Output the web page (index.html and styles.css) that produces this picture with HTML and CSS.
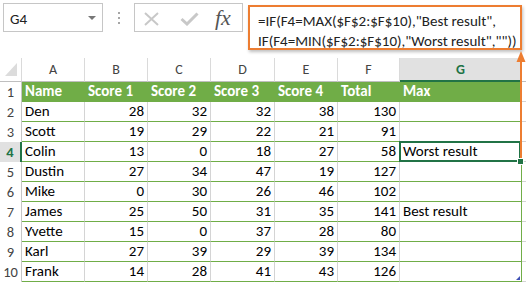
FILE: index.html
```html
<!DOCTYPE html>
<html>
<head>
<meta charset="utf-8">
<link rel="stylesheet" href="styles.css">
</head>
<body>
<div class="toolbar">
  <div class="namebox"><span>G4</span><span class="caret"></span></div>
  <div class="grip"><i></i><i></i><i></i></div>
  <div class="fxbox">
    <svg class="ic-x" width="15" height="14" viewBox="0 0 15 14"><path d="M1 1 L14 13 M14 1 L1 13" stroke="#c8c8c8" stroke-width="2" fill="none"/></svg>
    <svg class="ic-ok" width="19" height="14" viewBox="0 0 19 14"><path d="M1.5 7 L7 12 L17.5 1.5" stroke="#c8c8c8" stroke-width="3" fill="none"/></svg>
    <span class="fx">fx</span>
  </div>
  <div class="formula">=IF(F4=MAX($F$2:$F$10),"Best result",<br>IF(F4=MIN($F$2:$F$10),"Worst result",""))</div>
</div>
<svg class="arrow" width="10" height="110" viewBox="0 0 10 110"><path d="M5 8 L5 110" stroke="#ed7d31" stroke-width="2"/><path d="M5 0 L0.5 11 L9.5 11 Z" fill="#ed7d31"/></svg>
<div class="sheet">
  <div class="ch corner"></div><div class="ch">A</div><div class="ch">B</div><div class="ch">C</div><div class="ch">D</div><div class="ch">E</div><div class="ch">F</div><div class="ch chg">G</div><div class="ch stub"></div>

  <div class="rh">1</div><div class="c hd">Name</div><div class="c hd">Score 1</div><div class="c hd">Score 2</div><div class="c hd">Score 3</div><div class="c hd">Score 4</div><div class="c hd">Total</div><div class="c hd">Max</div><div class="h"></div>

  <div class="rh">2</div><div class="c">Den</div><div class="c n">28</div><div class="c n">32</div><div class="c n">32</div><div class="c n">38</div><div class="c n">130</div><div class="c g"></div><div class="h"></div>

  <div class="rh">3</div><div class="c">Scott</div><div class="c n">19</div><div class="c n">29</div><div class="c n">22</div><div class="c n">21</div><div class="c n">91</div><div class="c g"></div><div class="h"></div>

  <div class="rh rhs">4</div><div class="c">Colin</div><div class="c n">13</div><div class="c n">0</div><div class="c n">18</div><div class="c n">27</div><div class="c n">58</div><div class="c g sel">Worst result</div><div class="h"></div>

  <div class="rh">5</div><div class="c">Dustin</div><div class="c n">27</div><div class="c n">34</div><div class="c n">47</div><div class="c n">19</div><div class="c n">127</div><div class="c g"></div><div class="h"></div>

  <div class="rh">6</div><div class="c">Mike</div><div class="c n">0</div><div class="c n">30</div><div class="c n">26</div><div class="c n">46</div><div class="c n">102</div><div class="c g"></div><div class="h"></div>

  <div class="rh">7</div><div class="c">James</div><div class="c n">25</div><div class="c n">50</div><div class="c n">31</div><div class="c n">35</div><div class="c n">141</div><div class="c g">Best result</div><div class="h"></div>

  <div class="rh">8</div><div class="c">Yvette</div><div class="c n">15</div><div class="c n">0</div><div class="c n">37</div><div class="c n">28</div><div class="c n">80</div><div class="c g"></div><div class="h"></div>

  <div class="rh">9</div><div class="c">Karl</div><div class="c n">27</div><div class="c n">39</div><div class="c n">29</div><div class="c n">39</div><div class="c n">134</div><div class="c g"></div><div class="h"></div>

  <div class="rh">10</div><div class="c">Frank</div><div class="c n">14</div><div class="c n">28</div><div class="c n">41</div><div class="c n">43</div><div class="c n">126</div><div class="c g last"></div><div class="h"></div>
</div>
</body>
</html>
```
FILE: styles.css
```css
* { box-sizing: border-box; margin: 0; padding: 0; }
html, body { width: 526px; height: 283px; overflow: hidden; background: #fff; }
body { font-family: Carlito, "Liberation Sans", Arial, sans-serif; font-size: 15px; color: #000; position: relative; }

.toolbar { height: 58px; display: flex; align-items: flex-start; }
.namebox { margin: 3px 0 0 3px; width: 100px; height: 29px; border: 1px solid #c6c6c6; display: flex; align-items: center; justify-content: space-between; padding: 2px 6px 0 6px; color: #222; font-size: 15px; }
.caret { width: 0; height: 0; border-left: 4px solid transparent; border-right: 4px solid transparent; border-top: 4px solid #777; margin-top: -2px; }
.grip { width: 31px; height: 29px; margin-top: 3px; display: flex; flex-direction: column; align-items: center; justify-content: center; gap: 3px; }
.grip i { display: block; width: 2px; height: 2px; background: #a6a6a6; }
.fxbox { margin-top: 3px; width: 109px; height: 29px; border: 1px solid #c6c6c6; display: flex; align-items: center; padding: 3px 0 0 9px; }
.ic-ok { margin-left: 21px; }
.fx { margin-left: 16px; font-family: "Liberation Serif", "DejaVu Serif", serif; font-style: italic; font-size: 22px; color: #555; line-height: 20px; margin-top: -3px; }
.formula { margin: 5px 0 0 5px; width: 274px; height: 45px; border: 2px solid #ed7d31; box-shadow: 1px 2px 3px rgba(0,0,0,0.25); padding: 4px 0 0 8px; line-height: 20px; font-size: 15px; color: #222; white-space: nowrap; background: #fff; }

.arrow { position: absolute; left: 516px; top: 51px; z-index: 5; }

.sheet { display: grid; grid-template-columns: 22px 63px 63px 63px 64px 63px 62px 122px 4px; grid-template-rows: 24px repeat(10, 20px); }
.ch { border-right: 1px solid #dadada; border-bottom: 1px solid #bfbfbf; color: #444; text-align: center; line-height: 24px; font-size: 14px; }
.corner { position: relative; }
.corner::after { content: ""; position: absolute; right: 4px; bottom: 5px; width: 0; height: 0; border-left: 12px solid transparent; border-bottom: 13px solid #dcdcdc; }
.chg { background: #e1e1e1; border-bottom: 2px solid #217346; color: #217346; font-weight: bold; }
.stub { border-right: none; }
.rh { border-right: 1px solid #c6c6c6; color: #444; text-align: center; line-height: 20px; font-size: 14.5px; }
.rhs { background: #e1e1e1; color: #217346; font-weight: bold; border-right: 2px solid #217346; }
.c { border-right: 1px solid #d4d4d4; border-bottom: 1px solid #70ad47; line-height: 19px; padding: 0 3px; white-space: nowrap; overflow: visible; }
.n { text-align: right; }
.hd { background: #70ad47; color: #fff; font-weight: bold; border-right-color: #70ad47; font-size: 15px; }
.g { border-right-color: #70ad47; }
.h { border-bottom: 1px solid #d4d4d4; }
.sel { position: relative; }
.sel::after { content: ""; position: absolute; left: -1px; top: -1px; right: 0; bottom: -1px; border: 2px solid #217346; }
.sel::before { content: ""; position: absolute; right: -3px; bottom: -4px; width: 5px; height: 5px; background: #217346; border: 1px solid #fff; z-index: 6; }
.last { position: relative; }
.last::after { content: ""; position: absolute; right: 1px; bottom: 1px; width: 0; height: 0; border-left: 4px solid transparent; border-bottom: 4px solid #3f51b5; }
```
